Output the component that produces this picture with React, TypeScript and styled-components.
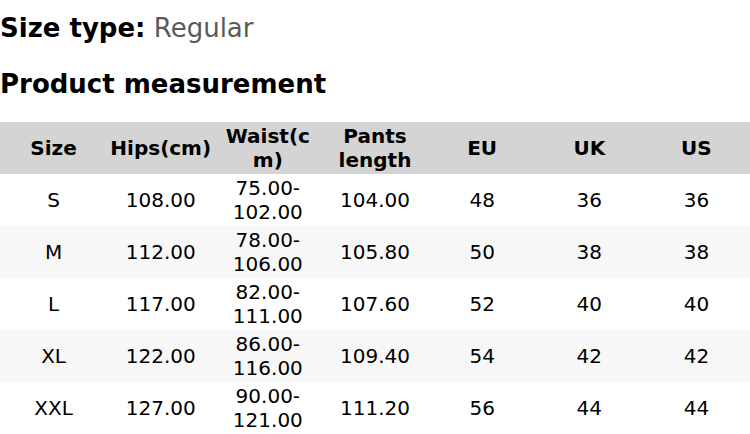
import React from 'react';
import styled, { createGlobalStyle } from 'styled-components';

interface RowProps {
  striped: boolean;
}

const rows = [
  ['S', '108.00', '75.00-102.00', '104.00', '48', '36', '36'],
  ['M', '112.00', '78.00-106.00', '105.80', '50', '38', '38'],
  ['L', '117.00', '82.00-111.00', '107.60', '52', '40', '40'],
  ['XL', '122.00', '86.00-116.00', '109.40', '54', '42', '42'],
  ['XXL', '127.00', '90.00-121.00', '111.20', '56', '44', '44'],
];

const headers = ['Size', 'Hips(cm)', 'Waist(cm)', 'Pants length', 'EU', 'UK', 'US'];

export default function App() {
  return (
    <Page>
      <GlobalStyle />
      <SizeType>
        <strong>Size type:</strong> <Value>Regular</Value>
      </SizeType>
      <Title>Product measurement</Title>
      <Table>
        <thead>
          <tr>
            {headers.map((h) => (
              <Th key={h}>{h}</Th>
            ))}
          </tr>
        </thead>
        <tbody>
          {rows.map((r, i) => (
            <Row key={r[0]} striped={i % 2 === 1}>
              {r.map((c, j) => (
                <Td key={j}>{c}</Td>
              ))}
            </Row>
          ))}
        </tbody>
      </Table>
    </Page>
  );
}

const GlobalStyle = createGlobalStyle`
  body {
    margin: 0;
    background: #fff;
    font-family: 'DejaVu Sans', sans-serif;
    color: #000;
  }
`;

const Page = styled.div`
  width: 750px;
`;

const SizeType = styled.div`
  font-size: 26px;
  line-height: 30px;
  padding-top: 13px;
`;

const Value = styled.span`
  color: #5a5a5a;
`;

const Title = styled.h2`
  font-size: 26px;
  line-height: 30px;
  font-weight: bold;
  margin: 26px 0 23px;
`;

const Table = styled.table`
  width: 750px;
  table-layout: fixed;
  border-collapse: collapse;
  font-size: 20px;
`;

const Th = styled.th`
  background: #d4d4d4;
  height: 52px;
  padding: 0 2px;
  font-weight: bold;
  text-align: center;
  vertical-align: middle;
  line-height: 24px;
  overflow-wrap: anywhere;
`;

const Row = styled.tr<RowProps>`
  background: ${(p) => (p.striped ? '#f7f7f7' : '#fff')};
`;

const Td = styled.td`
  height: 52px;
  padding: 0 2px;
  text-align: center;
  vertical-align: middle;
  line-height: 24px;
`;
